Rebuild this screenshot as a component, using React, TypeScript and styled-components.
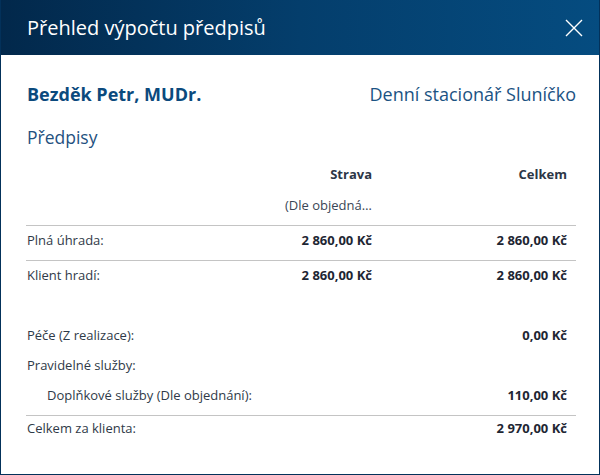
import React from "react";
import styled, { createGlobalStyle } from "styled-components";

const Global = createGlobalStyle`
  html, body { margin: 0; padding: 0; background: #ffffff; }
  body { font-family: "Open Sans", "Noto Sans", sans-serif; }
  * { box-sizing: border-box; }
`;

const Dialog = styled.div`
  width: 600px;
  height: 475px;
  display: flex;
  flex-direction: column;
  border: 1px solid #03315a;
  border-top: none;
  background: #ffffff;
  overflow: hidden;
`;

const Header = styled.div`
  height: 55px;
  flex: none;
  margin: 0 -1px;
  display: flex;
  align-items: center;
  justify-content: space-between;
  padding: 0 16px 0 27px;
  background: linear-gradient(90deg, #02284b 0%, #043e6c 50%, #054c80 100%);
`;

const Title = styled.h1`
  margin: 0;
  font-size: 20px;
  font-weight: 400;
  color: #ffffff;
`;

const CloseButton = styled.button`
  width: 20px;
  height: 20px;
  border: none;
  padding: 0;
  background: transparent;
  display: flex;
  align-items: center;
  justify-content: center;
  cursor: pointer;
`;

const Body = styled.div`
  flex: 1;
  padding: 24px 23px 0 25px;
  display: flex;
  flex-direction: column;
`;

const ClientLine = styled.div`
  display: flex;
  justify-content: space-between;
  align-items: center;
  height: 30px;
  padding: 0 0 0 1px;
`;

const ClientName = styled.div`
  font-size: 18px;
  font-weight: 700;
  color: #0b4a7d;
`;

const Facility = styled.div`
  font-size: 18px;
  color: #1b5383;
`;

const SectionTitle = styled.h2`
  margin: 15px 0 0 1px;
  font-size: 17.5px;
  font-weight: 400;
  color: #1f5180;
  height: 26px;
  line-height: 26px;
`;

const Row = styled.div<{ $h?: number; $line?: boolean; $pb?: number }>`
  display: grid;
  grid-template-columns: 249px 107px 195px;
  align-items: center;
  height: ${(p) => p.$h ?? 35}px;
  padding-bottom: ${(p) => p.$pb ?? 0}px;
  border-top: ${(p) => (p.$line ? "1px solid #c4c4c4" : "none")};
  font-size: 13px;
  color: #2f3a48;
  flex: none;
`;

const Label = styled.div<{ $indent?: boolean; $wide?: boolean }>`
  padding-left: ${(p) => (p.$indent ? 21 : 1)}px;
  white-space: nowrap;
  grid-column: ${(p) => (p.$wide ? "1 / 3" : "auto")};
`;

const Cell = styled.div<{ $bold?: boolean; $col?: number }>`
  text-align: right;
  padding-right: 10px;
  padding-left: 10px;
  font-weight: ${(p) => (p.$bold ? 700 : 400)};
  color: ${(p) => (p.$bold ? "#1e2633" : "#3a4656")};
  white-space: nowrap;
  overflow: hidden;
  text-overflow: ellipsis;
  grid-column: ${(p) => p.$col ?? "auto"};
`;

const HeadCell = styled(Cell)`
  font-weight: 700;
  color: #2c3646;
`;

const Spacer = styled.div<{ $h: number }>`
  height: ${(p) => p.$h}px;
  flex: none;
`;

export default function App() {
  return (
    <>
      <Global />
      <Dialog>
        <Header>
          <Title>Přehled výpočtu předpisů</Title>
          <CloseButton aria-label="Zavřít">
            <svg width="18" height="18" viewBox="0 0 18 18">
              <path d="M1 1 L17 17 M17 1 L1 17" stroke="#ffffff" strokeWidth="1.4" fill="none" />
            </svg>
          </CloseButton>
        </Header>
        <Body>
          <ClientLine>
            <ClientName>Bezděk Petr, MUDr.</ClientName>
            <Facility>Denní stacionář Sluníčko</Facility>
          </ClientLine>
          <SectionTitle>Předpisy</SectionTitle>
          <Spacer $h={8} />
          <Row $h={32}>
            <Label />
            <HeadCell $col={2}>Strava</HeadCell>
            <HeadCell $col={3}>Celkem</HeadCell>
          </Row>
          <Row $h={35} $pb={5}>
            <Label />
            <Cell $col={2}>(Dle objednání)</Cell>
            <Cell $col={3} />
          </Row>
          <Row $line $pb={6}>
            <Label>Plná úhrada:</Label>
            <Cell $bold>2 860,00 Kč</Cell>
            <Cell $bold>2 860,00 Kč</Cell>
          </Row>
          <Row $line $pb={6}>
            <Label>Klient hradí:</Label>
            <Cell $bold>2 860,00 Kč</Cell>
            <Cell $bold>2 860,00 Kč</Cell>
          </Row>
          <Spacer $h={25} />
          <Row $h={30}>
            <Label $wide>Péče (Z realizace):</Label>
            <Cell $bold $col={3}>0,00 Kč</Cell>
          </Row>
          <Row $h={30}>
            <Label $wide>Pravidelné služby:</Label>
          </Row>
          <Row $h={30}>
            <Label $wide $indent>Doplňkové služby (Dle objednání):</Label>
            <Cell $bold $col={3}>110,00 Kč</Cell>
          </Row>
          <Spacer $h={5} />
          <Row $line $h={30} $pb={5}>
            <Label $wide>Celkem za klienta:</Label>
            <Cell $bold $col={3}>2 970,00 Kč</Cell>
          </Row>
        </Body>
      </Dialog>
    </>
  );
}
